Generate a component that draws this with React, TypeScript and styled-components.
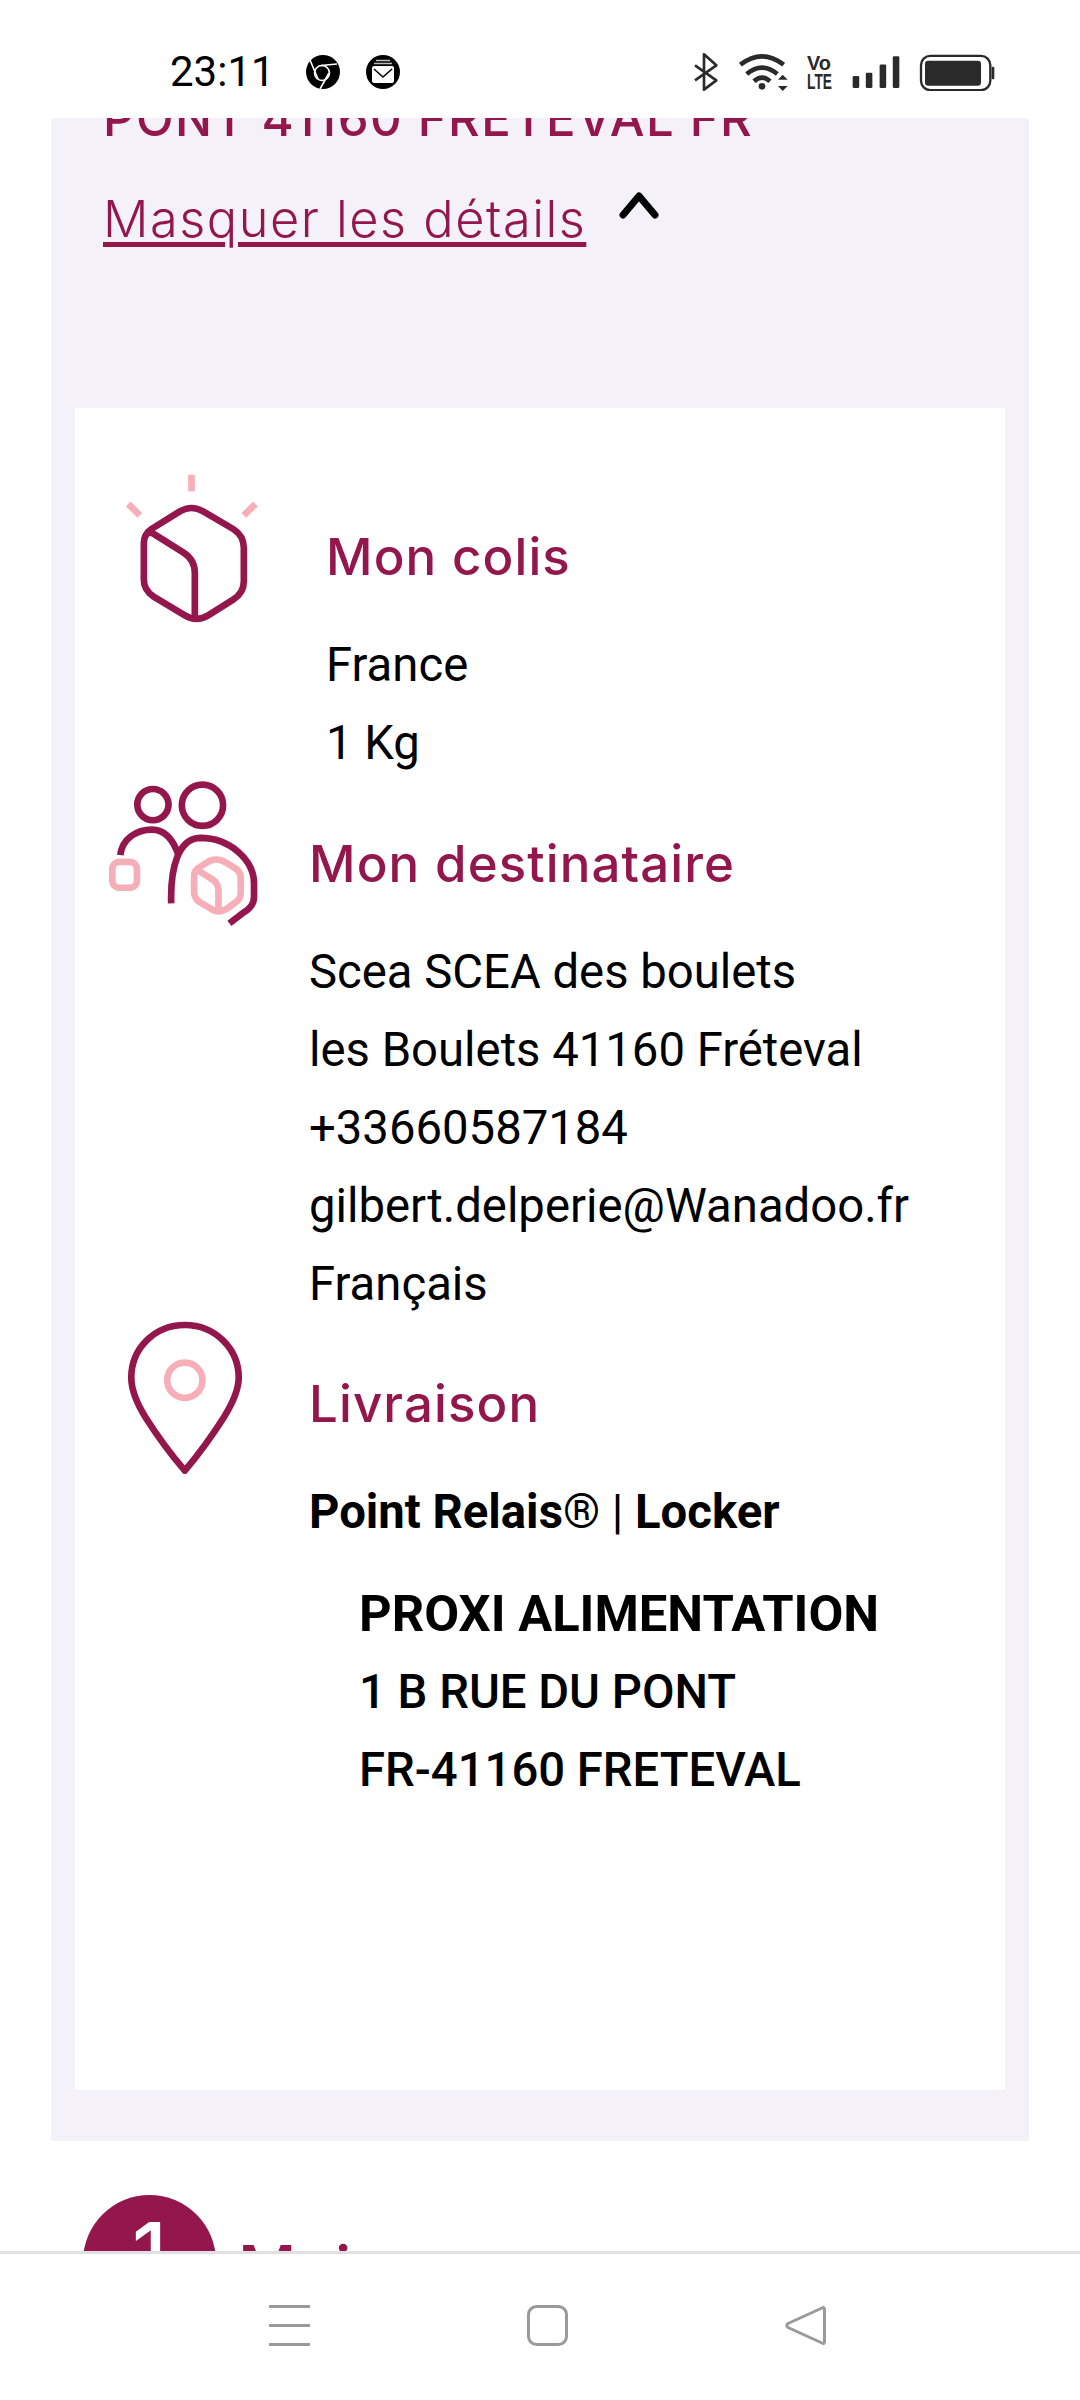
import * as React from 'react';
import styled, { createGlobalStyle } from 'styled-components';

const burgundy = '#93164c';
const pink = '#f6aeb9';
const ink = '#2a2a2a';
const grey = '#9a9a9a';

const GlobalStyle = createGlobalStyle`
    html, body {
        margin: 0;
        padding: 0;
        background: #fff;
    }
    * {
        box-sizing: border-box;
    }
`;

const Screen = styled.div`
    width: 1080px;
    height: 2400px;
    display: flex;
    flex-direction: column;
    overflow: hidden;
    background: #fff;
    font-family: Roboto, "Liberation Sans", sans-serif;
    color: #000;
`;

const StatusBar = styled.div`
    height: 118px;
    flex: none;
    display: flex;
    align-items: center;
    justify-content: space-between;
    padding: 50px 85px 24px 170px;
    background: #fff;
`;

const StatusGroup = styled.div<{ $gap: number }>`
    display: flex;
    align-items: center;
    gap: ${p => p.$gap}px;
`;

const Time = styled.div`
    font-size: 42px;
    line-height: 44px;
    width: 102px;
    margin-right: 8px;
    white-space: nowrap;
    color: #000;
`;

const Scroller = styled.div`
    flex: 1;
    min-height: 0;
    overflow: hidden;
`;

const Panel = styled.section`
    margin: -32px 51px 0;
    padding: 0 24px 51px;
    background: #f4f2f8;
`;

const Destination = styled.div`
    padding: 0 28px;
    height: 66px;
    font-family: Inter, sans-serif;
    font-size: 49px;
    font-weight: 550;
    line-height: 66px;
    letter-spacing: 1.5px;
    white-space: nowrap;
    color: ${burgundy};
`;

const DetailsToggle = styled.div`
    display: flex;
    align-items: flex-start;
    gap: 33px;
    padding: 37px 28px 0;
    height: 256px;
`;

const DetailsLink = styled.a`
    font-family: Inter, sans-serif;
    font-size: 50.5px;
    font-weight: 350;
    line-height: 60px;
    letter-spacing: 1.5px;
    color: ${burgundy};
    text-decoration: underline;
    text-decoration-thickness: 5px;
    text-underline-offset: 5px;
`;

const Chevron = styled.svg`
    margin-top: 2px;
`;

const Card = styled.div`
    background: #fff;
    height: 1682px;
    padding-top: 117px;
    display: flex;
    flex-direction: column;
`;

const Block = styled.div<{ $gap?: number }>`
    display: flex;
    align-items: flex-start;
    margin-top: ${p => p.$gap ?? 0}px;
`;

const IconCol = styled.div<{ $width: number; $left: number; $top: number }>`
    flex: none;
    width: ${p => p.$width}px;
    padding-left: ${p => p.$left}px;
    margin-top: ${p => p.$top}px;
    display: flex;
`;

const Body = styled.div`
    flex: 1;
    min-width: 0;
`;

const Title = styled.h2`
    margin: 0 0 37px;
    height: 64px;
    font-family: Inter, sans-serif;
    font-size: 51px;
    font-weight: 550;
    line-height: 64px;
    letter-spacing: 1.1px;
    color: ${burgundy};
`;

const Line = styled.div<{ $strong?: boolean }>`
    font-size: 47.25px;
    line-height: 78px;
    font-weight: ${p => (p.$strong ? 700 : 400)};
`;

const Thin = styled.span`
    font-weight: 400;
`;

const Address = styled.div`
    margin-top: 24px;
    padding-left: 50px;
`;

const AddressLine = styled.div<{ $lead?: boolean }>`
    line-height: 78px;
    font-size: ${p => (p.$lead ? 50.7 : 47.25)}px;
    font-weight: ${p => (p.$lead ? 700 : 500)};
`;

const Step = styled.div`
    display: flex;
    align-items: flex-start;
    gap: 22px;
    padding: 54px 0 0 83px;
`;

const StepBadge = styled.div`
    width: 133px;
    height: 133px;
    flex: none;
    border-radius: 50%;
    background: ${burgundy};
    color: #fff;
    display: flex;
    justify-content: center;
    font-family: Inter, sans-serif;
    font-size: 84px;
    font-weight: 500;
    line-height: 116px;
`;

const StepTitle = styled.div`
    margin-top: 36px;
    font-family: Inter, sans-serif;
    font-size: 64px;
    font-weight: 500;
    line-height: 76px;
    color: ${burgundy};
`;

const NavBar = styled.nav`
    height: 149px;
    flex: none;
    display: flex;
    justify-content: center;
    gap: 217px;
    padding: 51px 0 0 14px;
    background: #fff;
    border-top: 3px solid #e0e0e0;
`;

const Stroke = styled.g<{ $color: string; $width?: number }>`
    fill: none;
    stroke: ${p => p.$color};
    stroke-width: ${p => p.$width ?? 20}px;
    stroke-linecap: butt;
    stroke-linejoin: round;
`;

const ParcelIcon = () => (
    <svg width={137} height={150} viewBox="100 70 410 450">
        <Stroke $color={pink}>
            <path d="M305 75V125M115 163L150 197M497 163L462 197" />
        </Stroke>
        <Stroke $color={burgundy}>
            <path d="M270 185Q305 165 340 185L430 238Q462 258 462 295V395Q462 430 430 450L355 497Q320 518 285 497L190 440Q162 420 162 390V280Q162 255 185 238Z" />
            <path d="M170 250Q185 245 200 258L280 308Q315 330 315 370V505" />
        </Stroke>
    </svg>
);

const RecipientIcon = () => (
    <svg width={153} height={147} viewBox="50 60 460 440">
        <Stroke $color={pink}>
            <rect x={66} y={305} width={74} height={78} rx={22} />
            <path d="M355 304Q378 292 402 304L435 324Q452 335 452 354V398Q452 418 435 428L410 446Q385 462 362 446L330 427Q312 415 312 397V345Q312 330 330 320Z" />
            <path d="M325 332L370 360Q385 373 385 392V458" />
        </Stroke>
        <Stroke $color={burgundy}>
            <circle cx={188} cy={133} r={47} />
            <circle cx={337} cy={135} r={62} />
            <path d="M90 285C95 235 140 208 185 208C225 208 250 240 265 285" />
            <path d="M243 430C240 320 265 235 330 233C420 233 492 300 492 370V410Q492 440 460 458L418 490" />
        </Stroke>
    </svg>
);

const PinIcon = () => (
    <svg width={117} height={153} viewBox="80 60 350 460">
        <Stroke $color={pink}>
            <circle cx={253} cy={238} r={53} />
        </Stroke>
        <Stroke $color={burgundy}>
            <path d="M253 72C345 72 415 145 415 230C415 270 395 310 370 350C335 405 295 460 253 510C210 460 170 405 135 350C110 310 92 270 92 230C92 145 160 72 253 72Z" />
        </Stroke>
    </svg>
);

const ChromeIcon = () => (
    <svg width={34} height={34} viewBox="0 0 34 34">
        <circle cx={17} cy={17} r={17} fill="#000" />
        <Stroke $color="#fff" $width={1.6}>
            <circle cx={16} cy={18} r={7.5} />
            <path d="M15 10.5L31 9M4 5L12 24M23 18L14 34" />
        </Stroke>
    </svg>
);

const MailIcon = () => (
    <svg width={34} height={34} viewBox="0 0 34 34">
        <circle cx={17} cy={17} r={17} fill="#000" />
        <rect x={6} y={11} width={22} height={17} rx={2} fill="#fff" />
        <Stroke $color="#000" $width={1.6}>
            <path d="M8 14L17 22L26 14" />
        </Stroke>
        <Stroke $color="#bbb" $width={1.5}>
            <path d="M8 8.5H26M10 5.5H24" />
        </Stroke>
    </svg>
);

const BluetoothIcon = () => (
    <svg width={26} height={40} viewBox="102 65 78 120">
        <Stroke $color={ink} $width={8}>
            <path d="M108 105L172 150L135 178V72L172 105L108 150" />
        </Stroke>
    </svg>
);

const WifiIcon = () => (
    <svg width={50} height={40} viewBox="238 62 150 120">
        <Stroke $color={ink} $width={14}>
            <path d="M245 100Q310 50 375 100M264 128Q310 90 356 128M286 150Q310 128 334 150" />
        </Stroke>
        <circle cx={310} cy={165} r={10} fill={ink} />
        <path d="M358 145L372 130L387 145ZM358 164L387 164L372 179Z" fill={ink} />
    </svg>
);

const VoLteIcon = () => (
    <svg width={26} height={36} viewBox="0 0 26 36">
        <text x={0} y={16} fontFamily="Liberation Sans, sans-serif" fontSize={21} fontWeight={700} fill={ink} textLength={24} lengthAdjust="spacingAndGlyphs">Vo</text>
        <text x={0} y={35} fontFamily="Liberation Sans, sans-serif" fontSize={22} fontWeight={700} fill={ink} textLength={25} lengthAdjust="spacingAndGlyphs">LTE</text>
    </svg>
);

const SignalIcon = () => (
    <svg width={48} height={34} viewBox="578 72 146 102">
        <g fill={ink}>
            <rect x={580} y={135} width={20} height={37} rx={4} />
            <rect x={620} y={125} width={20} height={47} rx={4} />
            <rect x={662} y={100} width={20} height={72} rx={4} />
            <rect x={702} y={75} width={20} height={97} rx={4} />
        </g>
    </svg>
);

const BatteryIcon = () => (
    <svg width={76} height={37} viewBox="774 70 228 110">
        <Stroke $color={ink} $width={7}>
            <rect x={780} y={75} width={208} height={103} rx={28} />
        </Stroke>
        <rect x={792} y={90} width={168} height={75} rx={10} fill={ink} />
        <rect x={992} y={108} width={8} height={37} rx={3} fill={ink} />
    </svg>
);

const MenuIcon = () => (
    <svg width={41} height={41} viewBox="0 0 41 41">
        <Stroke $color={grey} $width={3}>
            <path d="M0 1.5H41M0 20.5H41M0 39.5H41" />
        </Stroke>
    </svg>
);

const HomeIcon = () => (
    <svg width={41} height={41} viewBox="0 0 41 41">
        <Stroke $color={grey} $width={3}>
            <rect x={1.5} y={1.5} width={38} height={38} rx={8} />
        </Stroke>
    </svg>
);

const BackIcon = () => (
    <svg width={41} height={41} viewBox="0 0 41 41">
        <Stroke $color={grey} $width={3}>
            <path d="M37 3Q39.5 1.5 39.5 5V36Q39.5 39.5 37 38L3 22.5Q0.5 20.5 3 18.5Z" />
        </Stroke>
    </svg>
);

export default function App() {
    return (
        <Screen>
            <GlobalStyle />
            <StatusBar>
                <StatusGroup $gap={26}>
                    <Time>23:11</Time>
                    <ChromeIcon />
                    <MailIcon />
                </StatusGroup>
                <StatusGroup $gap={19}>
                    <BluetoothIcon />
                    <WifiIcon />
                    <VoLteIcon />
                    <SignalIcon />
                    <BatteryIcon />
                </StatusGroup>
            </StatusBar>

            <Scroller>
                <Panel>
                    <Destination>PONT 41160 FRETEVAL FR</Destination>
                    <DetailsToggle>
                        <DetailsLink>Masquer les détails</DetailsLink>
                        <Chevron width={40} height={28} viewBox="0 0 40 28">
                            <path d="M4 24L20 5L36 24" fill="none" stroke="#000" strokeWidth={7} strokeLinecap="round" strokeLinejoin="round" />
                        </Chevron>
                    </DetailsToggle>

                    <Card>
                        <Block>
                            <IconCol $width={251} $left={48} $top={-52}>
                                <ParcelIcon />
                            </IconCol>
                            <Body>
                                <Title>Mon colis</Title>
                                <Line>France</Line>
                                <Line>1 Kg</Line>
                            </Body>
                        </Block>

                        <Block $gap={50}>
                            <IconCol $width={234} $left={32} $top={-52}>
                                <RecipientIcon />
                            </IconCol>
                            <Body>
                                <Title>Mon destinataire</Title>
                                <Line>Scea SCEA des boulets</Line>
                                <Line>les Boulets 41160 Fréteval</Line>
                                <Line>+33660587184</Line>
                                <Line>gilbert.delperie@Wanadoo.fr</Line>
                                <Line>Français</Line>
                            </Body>
                        </Block>

                        <Block $gap={49}>
                            <IconCol $width={234} $left={52} $top={-51}>
                                <PinIcon />
                            </IconCol>
                            <Body>
                                <Title>Livraison</Title>
                                <Line $strong>
                                    Point Relais<Thin>® | </Thin>Locker
                                </Line>
                                <Address>
                                    <AddressLine $lead>PROXI ALIMENTATION</AddressLine>
                                    <AddressLine>1 B RUE DU PONT</AddressLine>
                                    <AddressLine>FR-41160 FRETEVAL</AddressLine>
                                </Address>
                            </Body>
                        </Block>
                    </Card>
                </Panel>

                <Step>
                    <StepBadge>1</StepBadge>
                    <StepTitle>Moi</StepTitle>
                </Step>
            </Scroller>

            <NavBar>
                <MenuIcon />
                <HomeIcon />
                <BackIcon />
            </NavBar>
        </Screen>
    );
}
